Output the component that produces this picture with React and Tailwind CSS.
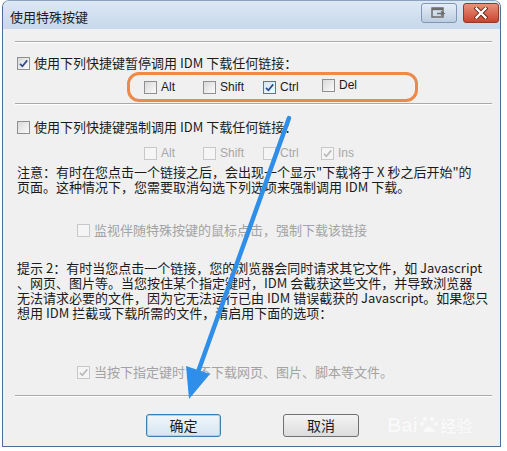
import React from 'react';

const cjk = "font-['Noto_Sans_CJK_SC',sans-serif]";
const latin = "font-['Liberation_Sans','Noto_Sans_CJK_SC',sans-serif]";

const Box = ({ checked, disabled, hot }) => (
  <span
    className={`relative inline-flex h-[13px] w-[13px] shrink-0 items-center justify-center border ${
      disabled
        ? 'border-[#c8c8c8] bg-[#f5f5f5]'
        : hot
        ? 'border-[#3c7fb1] bg-gradient-to-br from-[#cfe6f7] to-[#f4fbff]'
        : 'border-[#8e8f8f] bg-gradient-to-br from-[#d9d9d9] to-[#fbfbfb]'
    }`}
  >
    {checked && (
      <svg width="11" height="11" viewBox="0 0 11 11">
        <path
          d="M2 5.8 L4.4 8.3 L9.2 2.4"
          fill="none"
          stroke={disabled ? '#b9b9b9' : '#2d4a86'}
          strokeWidth="1.7"
        />
      </svg>
    )}
  </span>
);

const Key = ({ label, checked, disabled, hot, w }) => (
  <div className={`flex items-center ${w}`}>
    <Box checked={checked} disabled={disabled} hot={hot} />
    <span className={`ml-[4px] text-[12px] ${latin} ${disabled ? 'text-[#a8a8a8]' : 'text-[#1b1b1b]'}`}>{label}</span>
  </div>
);

const Sep = () => <div className="h-[2px] border-t border-[#a9a9a9] border-b border-b-white" />;

const Line = ({ children }) => <div className="h-[15px] whitespace-nowrap leading-[15px]">{children}</div>;

export default function App() {
  return (
    <div className="relative h-[451px] w-[507px] overflow-hidden bg-white pl-[2px]">
      <div className="flex h-[447px] w-[499px] flex-col overflow-hidden rounded-t-[7px] border border-[#4e6f93] border-t-[#8aa4c0] bg-[#f0f0f0]">
        {/* title bar */}
        <div className="flex h-[28px] shrink-0 items-center bg-gradient-to-b from-[#dde8f4] to-[#c7d8eb] pl-[7px] pr-[1px]">
          <span className={`pt-[3px] text-[13px] text-[#1d1d1d] ${cjk}`}>使用特殊按键</span>
          <div className="ml-auto flex items-start gap-[6px] self-start pt-[2px]">
            <div className="flex h-[20px] w-[36px] items-center justify-center rounded-[3px] border border-[#7f97b3] bg-gradient-to-b from-[#e6eef7] to-[#bccde1]">
              <svg width="16" height="12" viewBox="0 0 16 12">
                <rect x="1" y="1" width="11" height="9" fill="none" stroke="#6c6c6c" strokeWidth="1.5" />
                <rect x="1" y="1" width="11" height="2.2" fill="#6c6c6c" />
                <path d="M6 6.5 H12 M10 4.5 L13 6.5 L10 8.5" fill="none" stroke="#6c6c6c" strokeWidth="1.5" />
              </svg>
            </div>
            <div className="flex h-[20px] w-[36px] items-center justify-center rounded-[3px] border border-[#8d3b2e] bg-gradient-to-b from-[#e9917f] to-[#c8432b]">
              <svg width="14" height="12" viewBox="0 0 14 12">
                <path d="M2.5 1.5 L11.5 10.5 M11.5 1.5 L2.5 10.5" stroke="#5b1d12" strokeWidth="4" strokeLinecap="square" />
                <path d="M2.5 1.5 L11.5 10.5 M11.5 1.5 L2.5 10.5" stroke="#ffffff" strokeWidth="2.4" strokeLinecap="square" />
              </svg>
            </div>
          </div>
        </div>

        {/* content */}
        <div className={`flex flex-1 flex-col pl-[12px] pr-[8px] text-[13px] text-[#1b1b1b] ${cjk}`}>
          <div className="mt-[12px]">
            <Sep />
          </div>

          <div className="mt-[12px] flex h-[16px] items-center pl-[2px]">
            <Box checked />
            <span className="ml-[4px] leading-[16px]">使用下列快捷键暂停调用 IDM 下载任何链接：</span>
          </div>

          <div className="ml-[112px] mt-[1px] flex h-[30px] w-[291px] items-center rounded-[12px] border-[3px] border-[#ec8a4c] pl-[14px]">
            <Key label="Alt" w="w-[59px]" />
            <Key label="Shift" w="w-[60px]" />
            <Key label="Ctrl" w="w-[59px]" checked hot />
            <div className="-mt-[4px]">
              <Key label="Del" w="w-[50px]" />
            </div>
          </div>

          <div className="mt-[1px]">
            <Sep />
          </div>

          <div className="mt-[14px] flex h-[16px] items-center pl-[2px]">
            <Box />
            <span className="ml-[4px] leading-[16px]">使用下列快捷键强制调用 IDM 下载任何链接：</span>
          </div>

          <div className="mt-[10px] flex h-[16px] items-center pl-[129px]">
            <Key label="Alt" w="w-[59px]" disabled />
            <Key label="Shift" w="w-[60px]" disabled />
            <Key label="Ctrl" w="w-[58px]" disabled />
            <Key label="Ins" w="w-[50px]" disabled checked />
          </div>

          <div className="mt-[3px] pl-[2px]">
            <Line>注意：有时在您点击一个链接之后，会出现一个显示"下载将于 X 秒之后开始"的</Line>
            <Line>页面。这种情况下，您需要取消勾选下列选项来强制调用 IDM 下载。</Line>
          </div>

          <div className="mt-[28px] flex h-[16px] items-center pl-[62px] text-[#a3a3a3]">
            <Box disabled />
            <span className="ml-[4px] leading-[16px]">监视伴随特殊按键的鼠标点击，强制下载该链接</span>
          </div>

          <div className="mt-[22px] pl-[2px]">
            <Line>提示 2：有时当您点击一个链接，您的浏览器会同时请求其它文件，如 Javascript</Line>
            <Line>、网页、图片等。当您按住某个指定键时，IDM 会截获这些文件，并导致浏览器</Line>
            <Line>无法请求必要的文件，因为它无法运行已由 IDM 错误截获的 Javascript。如果您只</Line>
            <Line>想用 IDM 拦截或下载所需的文件，请启用下面的选项：</Line>
          </div>

          <div className="mt-[44px] flex h-[16px] items-center pl-[62px] text-[#a3a3a3]">
            <Box disabled checked />
            <span className="ml-[4px] leading-[16px]">当按下指定键时，不下载网页、图片、脚本等文件。</span>
          </div>

          <div className="mt-[15px]">
            <Sep />
          </div>

          <div className="mt-[13px] flex items-center pl-[131px]">
            <button className="flex h-[23px] w-[75px] items-center justify-center rounded-[3px] border border-[#3c7fb1] bg-gradient-to-b from-[#f1f6fa] to-[#d5e6f2] text-[14px] text-[#1b1b1b] shadow-[inset_0_0_0_1px_#9fd5f5]">
              确定
            </button>
            <button className="ml-[62px] flex h-[23px] w-[76px] items-center justify-center rounded-[3px] border border-[#707070] bg-gradient-to-b from-[#f4f4f4] to-[#dcdcdc] text-[14px] text-[#1b1b1b]">
              取消
            </button>
            <div className="ml-[28px] flex items-center text-[20px] font-bold text-white opacity-60 [text-shadow:0_0_1px_#e0e0e0]">
              <span className={latin}>Bai</span>
              <svg width="20" height="20" viewBox="0 0 20 20" className="mx-[1px]">
                <circle cx="6" cy="4" r="2.2" fill="#fff" />
                <circle cx="13" cy="4" r="2.2" fill="#fff" />
                <circle cx="3" cy="9" r="2" fill="#fff" />
                <circle cx="17" cy="9" r="2" fill="#fff" />
                <path d="M4 17 Q10 6 16 17 Z" fill="#fff" />
              </svg>
              <span className="text-[16px]">经验</span>
            </div>
          </div>
        </div>
      </div>

      {/* annotation arrow */}
      <svg className="pointer-events-none absolute left-0 top-0" width="507" height="451" viewBox="0 0 507 451">
        <line x1="289" y1="118" x2="198" y2="372" stroke="#2f8ee8" strokeWidth="4.5" strokeLinecap="round" />
        <polygon points="189,399 210,374 186,366" fill="#2f8ee8" />
      </svg>
    </div>
  );
}
